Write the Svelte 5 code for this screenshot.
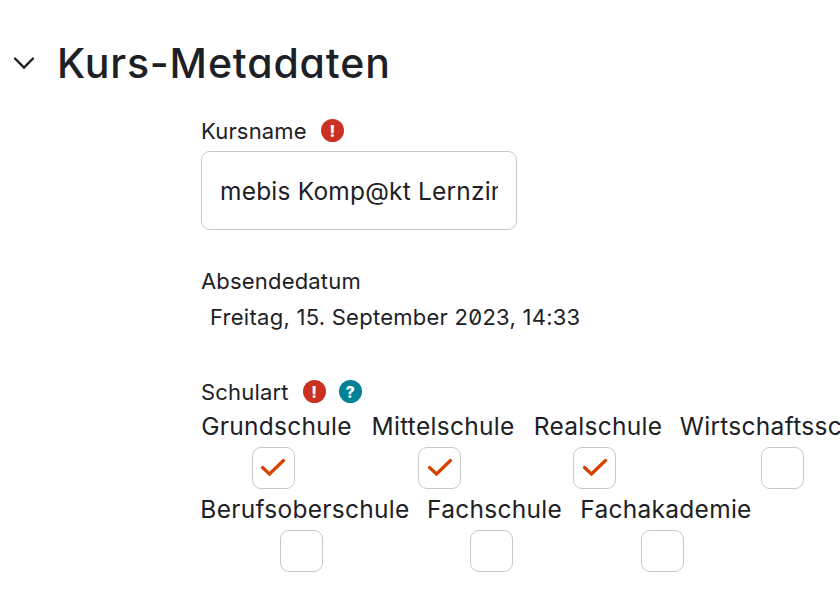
<script>
	let open = true;
	let kursname = 'mebis Komp@kt Lernzimmer';

	let schularten = [
		[
			{ name: 'Grundschule', width: 151, checked: true },
			{ name: 'Mittelschule', width: 144, checked: true },
			{ name: 'Realschule', width: 128, checked: true },
			{ name: 'Wirtschaftsschule', width: 210, checked: false }
		],
		[
			{ name: 'Berufsoberschule', width: 208, checked: false },
			{ name: 'Fachschule', width: 133, checked: false },
			{ name: 'Fachakademie', width: 172, checked: false }
		]
	];
</script>

<main>
	<h3>
		<button class="toggle" aria-label="Kurs-Metadaten" on:click={() => (open = !open)}>
			<svg width="22" height="14" viewBox="0 0 22 14">
				<path d="M2 2.5 L11 11.5 L20 2.5" fill="none" stroke="#1d2125" stroke-width="2.4" stroke-linecap="round" />
			</svg>
		</button>
		<span>Kurs-Metadaten</span>
	</h3>

	{#if open}
		<div class="fields">
			<div class="label">
				<label for="kursname">Kursname</label>
				<span class="icon required">!</span>
			</div>
			<input id="kursname" class="text" type="text" bind:value={kursname} />

			<div class="label">Absendedatum</div>
			<div class="date">Freitag, 15. September 2023, 14:33</div>

			<div class="label">
				<span>Schulart</span>
				<span class="icon required">!</span>
				<span class="icon help">?</span>
			</div>
			{#each schularten as row}
				<div class="row">
					{#each row as art}
						<label class="option" style="width: {art.width}px">
							<span>{art.name}</span>
							<input type="checkbox" bind:checked={art.checked} />
							<span class="box">
								{#if art.checked}
									<svg width="26" height="20" viewBox="0 0 26 20">
										<path d="M2.5 9.5 L9.5 16 L23.5 2.5" fill="none" stroke="#d64000" stroke-width="3.2" stroke-linecap="round" />
									</svg>
								{/if}
							</span>
						</label>
					{/each}
				</div>
			{/each}
		</div>
	{/if}
</main>

<style>
	:global(body) {
		background: #fff;
	}

	main {
		width: 840px;
		height: 601px;
		overflow: hidden;
		box-sizing: border-box;
		padding-top: 38px;
		color: #1d2125;
		font-family: Inter, 'Liberation Sans', sans-serif;
	}

	h3 {
		display: flex;
		align-items: center;
		height: 50px;
		margin: 0;
		padding-left: 13px;
		font-size: 41px;
		font-weight: 450;
		letter-spacing: 0.85px;
		font-feature-settings: 'cv11';
	}

	.toggle {
		display: flex;
		width: 22px;
		margin-right: 22px;
		padding: 0;
		border: 0;
		background: none;
	}

	.fields {
		padding: 28px 0 0 201px;
	}

	.label {
		display: flex;
		align-items: center;
		height: 30px;
		font-size: 22px;
		letter-spacing: 0.18px;
	}

	.icon {
		display: flex;
		align-items: center;
		justify-content: center;
		width: 23px;
		height: 23px;
		margin: -1px 0 0 14px;
		border-radius: 50%;
		color: #fff;
		font-size: 16px;
		font-weight: 800;
		letter-spacing: 0;
	}

	.required {
		background: #ca3120;
	}

	.help {
		margin-left: 13px;
		background: #008196;
	}

	.text {
		display: block;
		box-sizing: border-box;
		width: 316px;
		height: 79px;
		margin: 5px 0 36px;
		padding: 0 18px;
		border: 1px solid #c8c8c8;
		border-radius: 9px;
		color: #1d2125;
		font: 24.5px Inter, 'Liberation Sans', sans-serif;
		letter-spacing: 0.2px;
	}

	.date {
		height: 40px;
		margin-bottom: 41px;
		padding-left: 9px;
		font-size: 22px;
		line-height: 42px;
		letter-spacing: 0.26px;
		font-feature-settings: 'zero';
		white-space: nowrap;
	}

	.row {
		display: flex;
		gap: 19px;
		height: 83px;
	}

	.option {
		display: flex;
		flex: none;
		flex-direction: column;
		align-items: center;
		font-size: 24.5px;
		line-height: 38px;
		letter-spacing: 0.28px;
		white-space: nowrap;
	}

	.option input {
		display: none;
	}

	.box {
		display: flex;
		align-items: center;
		justify-content: center;
		box-sizing: border-box;
		width: 43px;
		height: 42px;
		margin: 2px 7px 0 0;
		border: 1px solid #c8c8c8;
		border-radius: 9px;
	}

	.box svg {
		margin-top: -1px;
	}
</style>
